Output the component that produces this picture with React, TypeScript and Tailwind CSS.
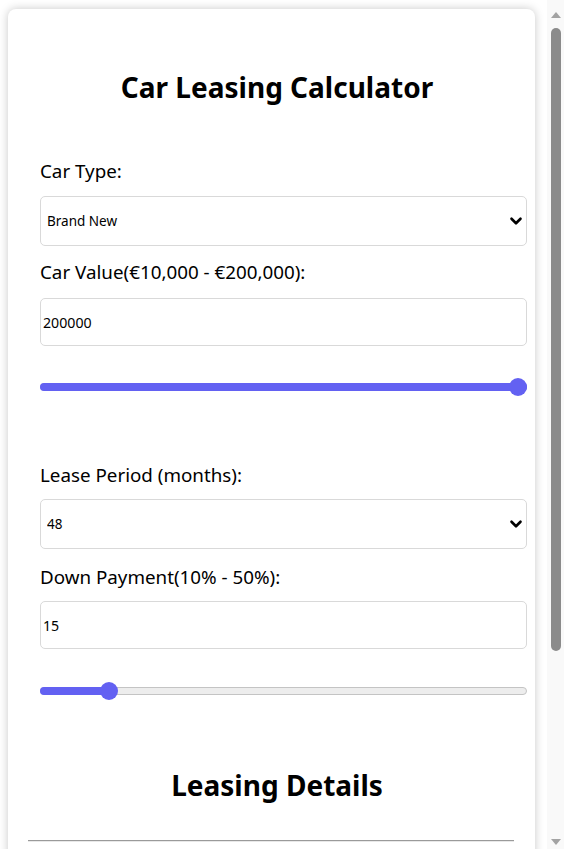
import { ChevronDown } from 'lucide-react';

function Slider({ pos, filled }: { pos: string; filled: string }) {
  return (
    <div className="relative h-[18px] w-[487px]">
      <div className="absolute left-0 right-0 top-[5px] h-[8px] rounded-full border border-[#c4c4c4] bg-[#ededed]" />
      <div className={`absolute left-0 top-[5px] h-[8px] rounded-full bg-[#6361f2] ${filled}`} />
      <div className={`absolute top-0 h-[18px] w-[18px] rounded-full bg-[#6361f2] ${pos}`} />
    </div>
  );
}

function SelectBox({ value }: { value: string }) {
  return (
    <div className="relative w-[487px]">
      <select className="h-[50px] w-full appearance-none rounded-[5px] border border-[#d9d9d9] bg-white pl-[6px] text-[13.5px] outline-none">
        <option>{value}</option>
      </select>
      <ChevronDown className="pointer-events-none absolute right-[2px] top-[16px] h-[18px] w-[18px]" strokeWidth={3.5} />
    </div>
  );
}

function Scrollbar() {
  return (
    <div className="flex w-[17px] shrink-0 flex-col items-center bg-[#f9f9f9]">
      <svg className="mt-[12px]" width="10" height="6" viewBox="0 0 10 6">
        <polygon points="5,0 10,6 0,6" fill="#a3a3a3" />
      </svg>
      <div className="mt-[10px] h-[623px] w-[10px] rounded-full bg-[#8b8b8b]" />
      <div className="flex-1" />
      <svg className="mb-[4px]" width="10" height="6" viewBox="0 0 10 6">
        <polygon points="0,0 10,0 5,6" fill="#a3a3a3" />
      </svg>
    </div>
  );
}

export default function App() {
  return (
    <div className="flex h-[849px] overflow-hidden bg-white font-['Noto_Sans',sans-serif] text-black">
      <div className="flex-1 overflow-hidden pt-[9px] pl-2">
        <div className="w-[527px] rounded-lg bg-white pl-8 pr-[21px] pt-[61px] pb-10 shadow-[0_0_10px_rgba(0,0,0,0.22)]">
          <h1 className="text-center text-[28px] font-bold leading-[34px]">Car Leasing Calculator</h1>

          <label className="mt-[55px] block text-[18.8px] leading-[24px]">Car Type:</label>
          <div className="mt-[13px]">
            <SelectBox value="Brand New" />
          </div>

          <label className="mt-[14px] block text-[18.8px] leading-[24px]">Car Value(€10,000 - €200,000):</label>
          <input
            readOnly
            value="200000"
            className="mt-[14px] block h-[48px] w-[487px] rounded-[5px] border border-[#d9d9d9] pl-[2px] text-[14.2px] outline-none"
          />

          <div className="mt-[32px]">
            <Slider pos="left-[469px]" filled="w-full" />
          </div>

          <label className="mt-[67px] block text-[18.8px] leading-[24px]">Lease Period (months):</label>
          <div className="mt-[12px]">
            <SelectBox value="48" />
          </div>

          <label className="mt-[16px] block text-[18.8px] leading-[24px]">Down Payment(10% - 50%):</label>
          <input
            readOnly
            value="15"
            className="mt-[12px] block h-[48px] w-[487px] rounded-[5px] border border-[#d9d9d9] pl-[2px] text-[14.2px] outline-none"
          />

          <div className="mt-[33px]">
            <Slider pos="left-[60px]" filled="w-[70px]" />
          </div>

          <h2 className="mt-[68px] text-center text-[28px] font-bold leading-[34px]">Leasing Details</h2>
          <div className="-ml-3 mt-[38px] h-0 w-[486px] border-t border-b border-t-[#9a9a9a] border-b-[#e8e8e8]" />
          <div className="h-[260px]" />
        </div>
      </div>
      <Scrollbar />
    </div>
  );
}
